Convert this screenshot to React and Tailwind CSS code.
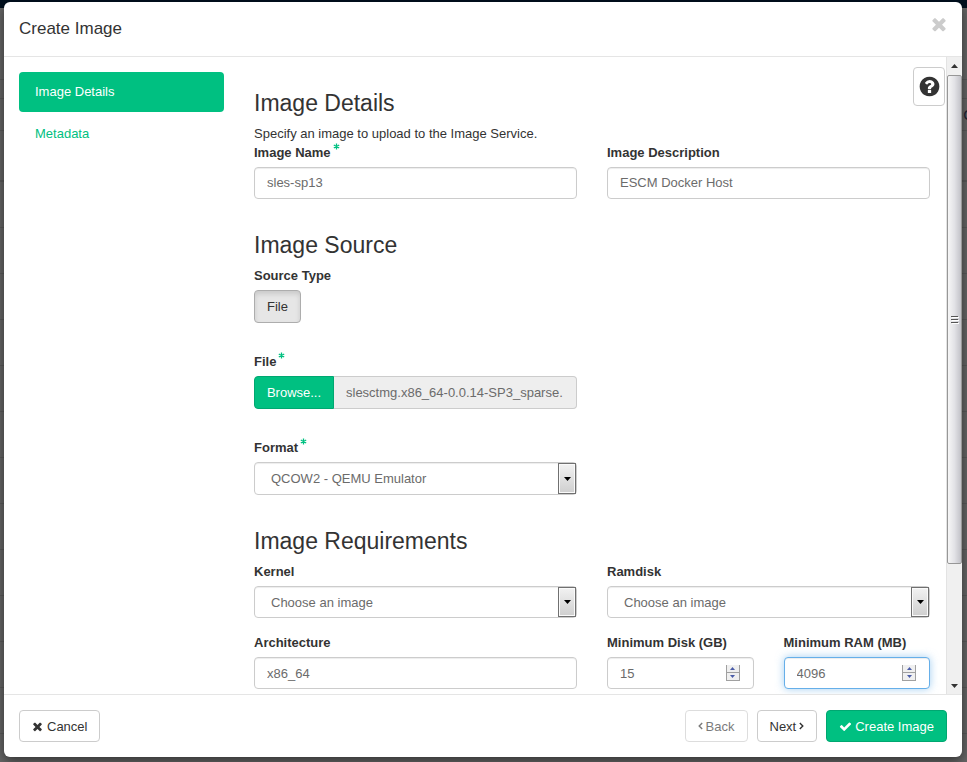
import React from "react";

const ICONS = {
  times:
    "M1490 1322q0 40-28 68l-136 136q-28 28-68 28t-68-28l-294-294-294 294q-28 28-68 28t-68-28l-136-136q-28-28-28-68t28-68l294-294-294-294q-28-28-28-68t28-68l136-136q28-28 68-28t68 28l294 294 294-294q28-28 68-28t68 28l136 136q28 28 28 68t-28 68l-294 294 294 294q28 28 28 68z",
  check:
    "M1671 566q0 40-28 68l-724 724-136 136q-28 28-68 28t-68-28l-136-136-362-362q-28-28-28-68t28-68l136-136q28-28 68-28t68 28l294 295 656-657q28-28 68-28t68 28l136 136q28 28 28 68z",
  question:
    "M1024 1376v-192q0-14-9-23t-23-9h-192q-14 0-23 9t-9 23v192q0 14 9 23t23 9h192q14 0 23-9t9-23zm256-672q0-88-55.5-163t-138.5-116-170-41q-243 0-371 213-15 24 8 42l132 100q7 6 19 6 16 0 25-12 53-68 86-92 34-24 86-24 48 0 85.5 26t37.5 59q0 38-20 61t-68 45q-63 28-115.5 86.5t-52.5 125.5v36q0 14 9 23t23 9h192q14 0 23-9t9-23q0-19 21.5-49.5t54.5-49.5q32-18 49-28.5t46-35 44.5-48 28-60.5 12.5-81zm384 192q0 209-103 385.5t-279.5 279.5-385.5 103-385.5-103-279.5-279.5-103-385.5 103-385.5 279.5-279.5 385.5-103 385.5 103 279.5 279.5 103 385.5z",
};

function Icon({ name, className }) {
  return (
    <svg viewBox="0 0 1792 1792" fill="currentColor" aria-hidden="true" className={className}>
      <path d={ICONS[name]} />
    </svg>
  );
}

function Angle({ flip }) {
  return (
    <svg viewBox="0 0 5 8" fill="none" stroke="currentColor" strokeWidth="1.4" aria-hidden="true" className="h-2 w-[5px]">
      <path d={flip ? "M0.8 1L3.8 4L0.8 7" : "M4.2 1L1.2 4L4.2 7"} />
    </svg>
  );
}

function Required() {
  return (
    <svg viewBox="0 0 7 7" stroke="#00c081" strokeWidth="1.3" aria-hidden="true" className="h-[7px] w-[7px]">
      <path d="M3.5 0.5V6.5M0.8 2L6.2 5M6.2 2L0.8 5" />
    </svg>
  );
}

const CONTROL =
  "block w-full rounded border border-[#ccc] bg-white px-3 text-[13px] text-[#6b6b6b] shadow-[inset_0_1px_1px_rgba(0,0,0,0.075)] outline-none";

function Field({ id, label, required, children }) {
  return (
    <div className="min-w-0">
      <label htmlFor={id} className="mb-[5px] flex h-[19px] gap-[2px] font-bold leading-[19px]">
        {label}
        {required && <Required />}
      </label>
      {children}
    </div>
  );
}

function SelectBox({ id, value, tall }) {
  return (
    <div className="relative">
      <select
        id={id}
        defaultValue={value}
        className={CONTROL + " appearance-none pl-4 " + (tall ? "h-[33px]" : "h-8")}
      >
        <option>{value}</option>
      </select>
      <span className="pointer-events-none absolute inset-y-px right-px flex w-[18px] items-center justify-center border border-[#707070] bg-linear-to-b from-[#f2f2f2] to-[#cfcfcf] shadow-[inset_0_0_0_1px_#fafafa]">
        <svg viewBox="0 0 7 4" aria-hidden="true" className="h-1 w-[7px]">
          <path d="M0 0H7L3.5 4Z" fill="#000" />
        </svg>
      </span>
    </div>
  );
}

function Stepper({ label, up }) {
  return (
    <button
      type="button"
      aria-label={label}
      className="flex h-2 w-full items-center justify-center border-x border-b border-[#a0a0a0] bg-[#f0f0f0]"
    >
      <svg viewBox="0 0 5 3" aria-hidden="true" className="h-[3px] w-[5px]">
        <path d={up ? "M0 3H5L2.5 0Z" : "M0 0H5L2.5 3Z"} fill="#4a5ca8" />
      </svg>
    </button>
  );
}

function NumberBox({ id, value, active }) {
  return (
    <div className="relative">
      <input
        id={id}
        type="number"
        defaultValue={value}
        className={
          "block h-8 w-full appearance-none rounded border bg-white px-3 text-[13px] text-[#6b6b6b] outline-none [-moz-appearance:textfield] [&::-webkit-inner-spin-button]:appearance-none " +
          (active
            ? "border-[#66afe9] shadow-[inset_0_1px_1px_rgba(0,0,0,0.075),0_0_8px_rgba(102,175,233,0.6)]"
            : "border-[#ccc] shadow-[inset_0_1px_1px_rgba(0,0,0,0.075)]")
        }
      />
      <div className="absolute inset-y-0 right-[14px] flex w-[14px] flex-col justify-center">
        <Stepper label="Increase" up />
        <Stepper label="Decrease" />
      </div>
    </div>
  );
}

function ScrollBar() {
  return (
    <div aria-hidden="true" className="flex w-4 shrink-0 flex-col border-l border-[#e3e3e3] bg-[#f0f0f0]">
      <div className="flex h-[18px] items-center justify-center">
        <svg viewBox="0 0 7 4" className="h-1 w-[7px]">
          <path d="M0 4H7L3.5 0Z" fill="#333" />
        </svg>
      </div>
      <div className="flex flex-[489] items-center justify-center rounded-[2px] border border-[#979797] bg-linear-to-r from-[#f6f6f6] via-[#e2e2e6] to-[#c2c2c8]">
        <svg viewBox="0 0 8 8" className="h-2 w-2">
          <path d="M0 0.5H7M0 3.5H7M0 6.5H7" stroke="#555" />
          <path d="M1 1.5H8M1 4.5H8M1 7.5H8" stroke="#fff" />
        </svg>
      </div>
      <div className="flex-[113]" />
      <div className="flex h-[17px] items-center justify-center">
        <svg viewBox="0 0 7 4" className="h-1 w-[7px]">
          <path d="M0 0H7L3.5 4Z" fill="#333" />
        </svg>
      </div>
    </div>
  );
}

function PageBehind() {
  const rows = Array.from({ length: 13 });
  return (
    <div aria-hidden="true" className="absolute inset-0 flex flex-col overflow-hidden bg-[#666]">
      <div className="h-2 shrink-0 bg-[#000f1e]" />
      <div className="h-[71px] shrink-0" />
      <div className="h-5 shrink-0 border-y border-[#5a5a5a]" />
      <div className="flex h-8 shrink-0 items-center justify-end border-b border-[#5a5a5a]">
        <span className="-mr-[7px] text-[15px] text-[#223]">C</span>
      </div>
      <div className="h-[51px] shrink-0 border-b-2 border-[#5a5a5a]" />
      {rows.map((_, i) => (
        <div key={i} className="h-[46px] shrink-0 border-b border-[#5a5a5a]" />
      ))}
    </div>
  );
}

const HEADING = "mb-2 text-[23px] leading-[26px]";
const BUTTON = "flex h-8 items-center gap-[3px] rounded border px-3 text-[13px]";

export default function App() {
  return (
    <div className="relative h-screen overflow-hidden font-['Liberation_Sans',Arial,sans-serif] text-[13px] leading-[19px] text-[#333]">
      <PageBehind />
      <div className="relative flex h-full pt-[2px] pr-[5px] pb-[5px] pl-1">
        <div
          role="dialog"
          aria-labelledby="dialog-title"
          className="flex min-w-0 flex-1 flex-col overflow-hidden rounded-md bg-white shadow-[0_4px_12px_rgba(0,0,0,0.5)]"
        >
          <header className="flex h-[55px] shrink-0 items-start justify-between border-b border-[#e5e5e5] pr-[13px] pl-[15px]">
            <h1 id="dialog-title" className="pt-[15px] text-[17px] leading-6">
              Create Image
            </h1>
            <button type="button" aria-label="Close" className="pt-3 text-[#ccc]">
              <Icon name="times" className="h-5 w-5" />
            </button>
          </header>

          <div className="flex min-h-0 flex-1">
            <nav className="flex w-[235px] shrink-0 flex-col gap-[2px] p-[15px]">
              <a href="#details" className="rounded bg-[#00c081] px-4 leading-10 text-white">
                Image Details
              </a>
              <a href="#metadata" className="rounded px-4 leading-10 text-[#00c081]">
                Metadata
              </a>
            </nav>

            <main className="relative min-w-0 flex-1 overflow-hidden pt-[33px] pr-4 pl-[15px]">
              <button
                type="button"
                aria-label="Help"
                className="absolute top-[10px] right-px flex h-[39px] w-8 items-center justify-center rounded border border-[#ccc] bg-white"
              >
                <Icon name="question" className="h-[23px] w-[23px]" />
              </button>

              <section id="details">
                <h2 className={HEADING}>Image Details</h2>
                <p>Specify an image to upload to the Image Service.</p>
                <div className="grid grid-cols-2 gap-[30px]">
                  <Field id="name" label="Image Name" required>
                    <input id="name" type="text" defaultValue="sles-sp13" className={CONTROL + " h-8 pb-px"} />
                  </Field>
                  <Field id="description" label="Image Description">
                    <input
                      id="description"
                      type="text"
                      defaultValue="ESCM Docker Host"
                      className={CONTROL + " h-8 pb-px"}
                    />
                  </Field>
                </div>
              </section>

              <section className="mt-[33px] grid grid-cols-2 gap-x-[30px]">
                <div>
                  <h2 className={HEADING}>Image Source</h2>
                  <Field id="source" label="Source Type">
                    <button
                      id="source"
                      type="button"
                      className="h-[33px] rounded border border-[#adadad] bg-[#e6e6e6] px-3 shadow-[inset_0_3px_5px_rgba(0,0,0,0.125)]"
                    >
                      File
                    </button>
                  </Field>
                  <div className="mt-[29px]">
                    <Field id="filename" label="File" required>
                      <div className="flex h-[33px]">
                        <button
                          type="button"
                          className="w-20 shrink-0 rounded-l border border-[#00a771] bg-[#00c081] text-white"
                        >
                          Browse...
                        </button>
                        <input
                          id="filename"
                          type="text"
                          readOnly
                          defaultValue="slesctmg.x86_64-0.0.14-SP3_sparse."
                          className="min-w-0 flex-1 rounded-r border border-l-0 border-[#ccc] bg-[#eee] px-3 text-[#6b6b6b] outline-none"
                        />
                      </div>
                    </Field>
                  </div>
                  <div className="mt-[29px]">
                    <Field id="format" label="Format" required>
                      <SelectBox id="format" value="QCOW2 - QEMU Emulator" tall />
                    </Field>
                  </div>
                </div>
              </section>

              <section className="mt-[33px]">
                <h2 className={HEADING}>Image Requirements</h2>
                <div className="grid grid-cols-2 gap-x-[30px] gap-y-[15px]">
                  <Field id="kernel" label="Kernel">
                    <SelectBox id="kernel" value="Choose an image" />
                  </Field>
                  <Field id="ramdisk" label="Ramdisk">
                    <SelectBox id="ramdisk" value="Choose an image" />
                  </Field>
                  <Field id="arch" label="Architecture">
                    <input id="arch" type="text" defaultValue="x86_64" className={CONTROL + " h-8"} />
                  </Field>
                  <div className="grid grid-cols-2 gap-[30px]">
                    <Field id="disk" label="Minimum Disk (GB)">
                      <NumberBox id="disk" value={15} />
                    </Field>
                    <Field id="ram" label="Minimum RAM (MB)">
                      <NumberBox id="ram" value={4096} active />
                    </Field>
                  </div>
                </div>
              </section>
            </main>

            <ScrollBar />
          </div>

          <footer className="flex h-[63px] shrink-0 items-center gap-[9px] border-t border-[#e5e5e5] px-[15px]">
            <button type="button" className={BUTTON + " mr-auto border-[#ccc]"}>
              <Icon name="times" className="-ml-px h-[13px] w-[13px]" />
              Cancel
            </button>
            <button type="button" disabled className={BUTTON + " border-[#ccc] opacity-65"}>
              <Angle />
              Back
            </button>
            <button type="button" className={BUTTON + " border-[#ccc]"}>
              Next
              <Angle flip />
            </button>
            <button type="button" className={BUTTON + " border-[#00a771] bg-[#00c081] text-white"}>
              <Icon name="check" className="h-[13px] w-[13px]" />
              Create Image
            </button>
          </footer>
        </div>
      </div>
    </div>
  );
}
